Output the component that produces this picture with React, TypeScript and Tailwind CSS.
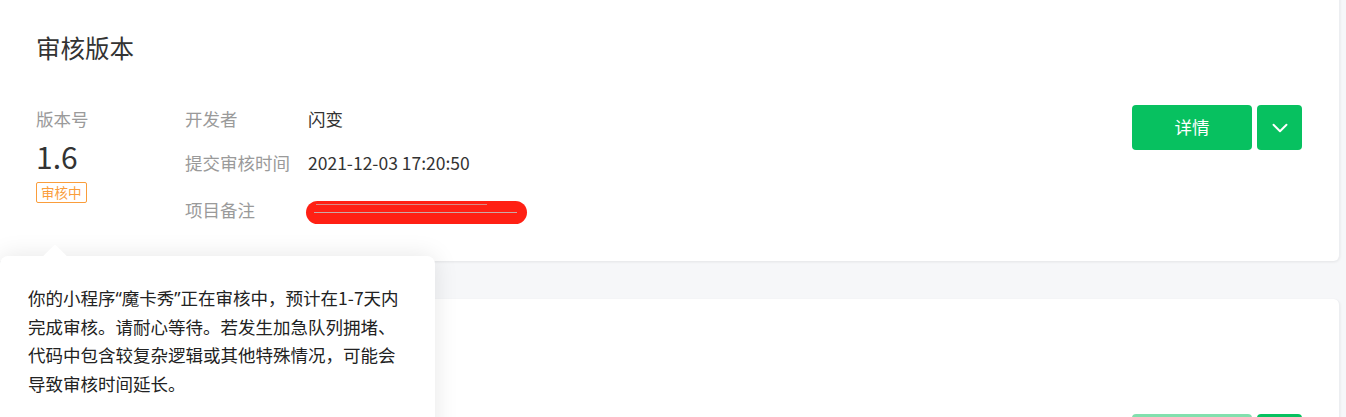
import { ChevronDown } from 'lucide-react';

const font = { fontFamily: '"Noto Sans CJK SC", "Noto Sans", sans-serif' };
const quote = { fontFamily: '"Noto Sans", sans-serif' };

function ActionButtons({ muted }: { muted?: boolean }) {
  return (
    <div className="flex gap-[5px]">
      <button
        className={`w-[120px] h-[45px] rounded-[4px] text-white text-[17.5px] ${
          muted ? 'bg-[#82e0ae]' : 'bg-[#07c160]'
        }`}
      >
        详情
      </button>
      <button className="w-[45px] h-[45px] rounded-[4px] bg-[#07c160] text-white flex items-center justify-center">
        <ChevronDown size={26} strokeWidth={1.8} />
      </button>
    </div>
  );
}

export default function App() {
  return (
    <div className="w-[1346px] h-[417px] overflow-hidden bg-[#f6f7f9] relative" style={font}>
      <div className="-mt-[10px] w-[1340px] flex flex-col gap-[38px]">
        {/* Review version card */}
        <section className="bg-white h-[271px] rounded-r-[6px] shadow-[0_1px_3px_rgba(0,0,0,0.08)] border-r border-[#eceef1] px-[36px] pt-[40px]">
          <h2 className="text-[24.5px] leading-[36px] text-[#333]">审核版本</h2>
          <div className="flex justify-between mt-[40px]">
            <div className="flex">
              <div className="w-[149px] flex flex-col">
                <span className="text-[17.5px] leading-[26px] text-[#9a9a9a]">版本号</span>
                <span className="text-[30px] leading-[38px] text-[#333] mt-[5px]">1.6</span>
                <span className="mt-[7px] self-start border border-[#fa9d3b] rounded-[2px] text-[#fa9d3b] text-[13.5px] leading-[19px] px-[4px]">
                  审核中
                </span>
              </div>
              <div className="flex flex-col gap-[18px]">
                <div className="flex text-[17.5px] leading-[26px]">
                  <span className="w-[123px] text-[#9a9a9a]">开发者</span>
                  <span className="text-[#333]">闪变</span>
                </div>
                <div className="flex text-[17.5px] leading-[26px]">
                  <span className="w-[123px] text-[#9a9a9a]">提交审核时间</span>
                  <span className="text-[#333]">2021-12-03 17:20:50</span>
                </div>
                <div className="flex items-center text-[17.5px] leading-[26px] mt-[2px]">
                  <span className="w-[121px] text-[#9a9a9a]">项目备注</span>
                  <span className="relative w-[221px] h-[23px] rounded-full bg-[#ff2014] mt-[5px]">
                    <span className="absolute left-[8px] right-[10px] top-[11px] h-[1px] bg-[#c9a9a6]" />
                    <span className="absolute left-[10px] right-[40px] top-[3px] h-[1px] bg-[#d98a84]" />
                  </span>
                </div>
              </div>
            </div>
            <div className="mt-[-1px] mr-[1px]">
              <ActionButtons />
            </div>
          </div>
        </section>

        {/* Online version card (mostly hidden under the tooltip) */}
        <section className="bg-white h-[271px] rounded-r-[6px] shadow-[0_1px_3px_rgba(0,0,0,0.08)] border-r border-[#eceef1] px-[36px] pt-[115px]">
          <div className="flex justify-end mr-[1px]">
            <ActionButtons muted />
          </div>
        </section>
      </div>

      {/* Review tooltip */}
      <div className="absolute left-0 top-[256px] w-[435px] h-[200px] bg-white rounded-[8px] shadow-[0_0_24px_rgba(0,0,0,0.1)] px-[28px] pt-[28px]">
        <span className="absolute left-[46px] -top-[8px] w-[18px] h-[18px] bg-white rotate-45 rounded-[2px]" />
        <p className="relative text-[17.5px] leading-[28.5px] text-[#222] whitespace-nowrap">
          你的小程序<span style={quote}>“</span>魔卡秀<span style={quote}>”</span>正在审核中，预计在1-7天内
          <br />
          完成审核。请耐心等待。若发生加急队列拥堵、
          <br />
          代码中包含较复杂逻辑或其他特殊情况，可能会
          <br />
          导致审核时间延长。
        </p>
      </div>
    </div>
  );
}
